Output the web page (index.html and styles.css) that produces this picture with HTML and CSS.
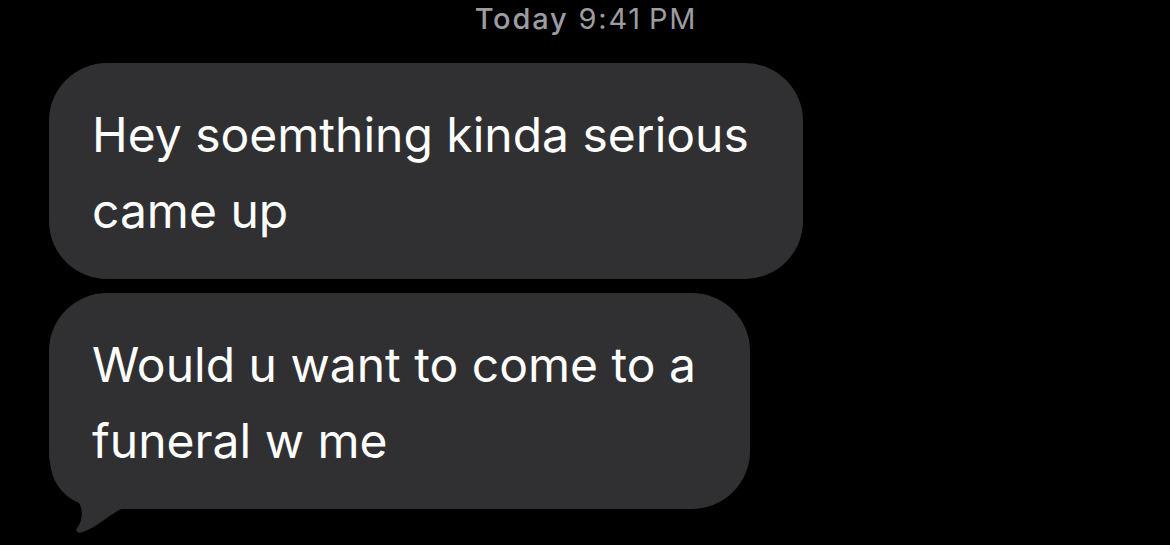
FILE: index.html
```html
<!DOCTYPE html>
<html lang="en">
<head>
<meta charset="utf-8">
<title>Messages</title>
<link rel="stylesheet" href="styles.css">
</head>
<body>
<div class="timestamp"><span class="day">Today</span> <span class="time">9:41&#8201;PM</span></div>
<div class="thread">
  <div class="bubble">Hey soemthing kinda serious<br>came up</div>
  <div class="bubble">Would u want to come to a<br>funeral w me
    <svg class="tail" width="90" height="92" viewBox="0 0 90 92" aria-hidden="true">
      <path d="M0 7 L1 19 C3 37 12 51 30 59 C34 65 34 77 28 84 C26 88 30 90 34 88 C48 83 60 71 74 64 L74 20 Z" fill="#303032"/>
    </svg>
  </div>
</div>
</body>
</html>
```

FILE: styles.css
```css
html, body {
  margin: 0;
  padding: 0;
  background: #000;
}

body {
  font-family: Inter, "Noto Sans", "Liberation Sans", sans-serif;
  width: 1170px;
  height: 545px;
  overflow: hidden;
}

.timestamp {
  text-align: center;
  color: #9c9ca1;
  font-size: 29px;
  line-height: 34px;
  padding-top: 2px;
  padding-left: 2px;
  letter-spacing: 1.8px;
}

.timestamp .day {
  font-weight: 500;
}

.timestamp .time {
  font-weight: 400;
}

.thread {
  display: flex;
  flex-direction: column;
  align-items: flex-start;
  gap: 14px;
  padding-left: 49px;
  margin-top: 27px;
}

.bubble {
  position: relative;
  background: #303032;
  color: #fff;
  font-size: 48px;
  line-height: 76px;
  border-radius: 58px;
  padding: 34px 54px 30px 43px;
  max-width: 710px;
  width: fit-content;
  box-sizing: content-box;
}

.tail {
  position: absolute;
  left: 0;
  bottom: -27px;
  display: block;
}
```
